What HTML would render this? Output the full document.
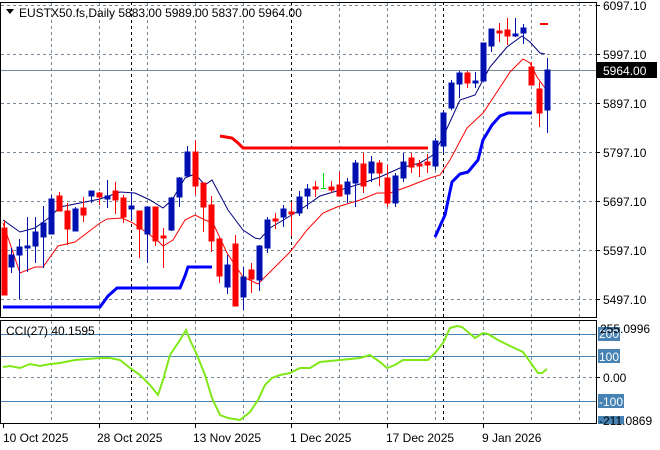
<!DOCTYPE html>
<html><head><meta charset="utf-8"><style>
html,body{margin:0;padding:0;background:#fff;}
svg{display:block;font-family:"Liberation Sans",sans-serif;font-size:12px;}
</style></head><body>
<svg width="660" height="450" viewBox="0 0 660 450" xmlns="http://www.w3.org/2000/svg">
<rect width="660" height="450" fill="#fff"/>
<g stroke="#778899" stroke-dasharray="3,3" stroke-width="1">
<line x1="1" y1="5.5" x2="596" y2="5.5"/><line x1="1" y1="54.5" x2="596" y2="54.5"/><line x1="1" y1="103.5" x2="596" y2="103.5"/><line x1="1" y1="152.5" x2="596" y2="152.5"/><line x1="1" y1="201.5" x2="596" y2="201.5"/><line x1="1" y1="250.5" x2="596" y2="250.5"/><line x1="1" y1="299.5" x2="596" y2="299.5"/>
<line x1="1" y1="377.5" x2="596" y2="377.5"/>
<path d="M51.5 2V317M99.5 2V317M147.5 2V317M195.5 2V317M243.5 2V317M339.5 2V317M387.5 2V317M435.5 2V317M483.5 2V317M531.5 2V317M579.5 2V317"/>
<path d="M51.5 321V423M99.5 321V423M147.5 321V423M195.5 321V423M243.5 321V423M339.5 321V423M387.5 321V423M435.5 321V423M483.5 321V423M531.5 321V423M579.5 321V423"/>
</g>
<g stroke="#000" stroke-dasharray="3,3"><path d="M131.5 2V317M291.5 2V317M443.5 2V317M131.5 321V423M291.5 321V423M443.5 321V423"/></g>
<line x1="1" y1="70.5" x2="596" y2="70.5" stroke="#778899"/>
<g stroke="#4682b4"><line x1="1" y1="334.5" x2="596" y2="334.5"/><line x1="1" y1="356.5" x2="596" y2="356.5"/><line x1="1" y1="401.5" x2="596" y2="401.5"/></g>
<!-- thick lines -->
<polyline fill="none" stroke="#0000ff" stroke-width="3" points="3,307 100,307 108,296 117,288 180,288 185,276 188,267 212,267"/>
<polyline fill="none" stroke="#0000ff" stroke-width="3" points="435,237 445,215 452,182 460,174 468,172 478,160 483,140 492,125 500,116 508,113 532,113"/>
<polyline fill="none" stroke="#ff0000" stroke-width="3" points="220,136 232,138 238,143 243,148 428,148"/>
<line x1="540" y1="24" x2="548" y2="24" stroke="#ff0000" stroke-width="2"/>
<!-- MAs -->
<polyline fill="none" stroke="#000080" points="3,220 20,232 35,228 50,217 60,207 80,203 100,199 120,192 135,193 150,200 163,208 172,200 185,178 195,174 205,185 212,180 228,210 243,230 255,238 260,239 270,228 280,222 300,210 320,196 340,190 360,184 380,177 400,168 420,163 433,155 443,137 460,100 475,95 490,67 507,47 522,36 530,42 540,53 545,54"/>
<polyline fill="none" stroke="#ff0000" points="3,223 20,273 35,267 43,267 58,246 75,242 100,223 107,219 122,218 133,223 143,230 157,240 163,246 173,240 185,220 195,215 205,220 213,223 227,253 243,277 258,284 270,272 290,252 307,230 323,213 337,207 360,200 377,193 390,193 407,187 430,178 440,175 450,160 467,128 483,113 497,92 510,72 523,59 530,63 537,77 545,88"/>
<!-- candles -->
<g stroke-width="1">
<g stroke="#ff0000" fill="#ff0000">
<path d="M4.5 220V295M59.5 192V211M67.5 203V245M83.5 197V222M99.5 192V205M115.5 182V214M123.5 195V223M139.5 211V258M155.5 207V246M163.5 228V268M195.5 140V195M203.5 183V232M211.5 196V252M219.5 238V283M235.5 235V305M251.5 263V293M275.5 213V229M291.5 202V236M315.5 181V197M331.5 181V193M339.5 172V196M363.5 153V193M379.5 160V186M387.5 165V207M411.5 153V173M419.5 160V177M427.5 154V173M467.5 71V88M499.5 23V42M507.5 18V45M531.5 62V85M539.5 82V127"/>
<rect x="2" y="228" width="5" height="67"/><rect x="57" y="196" width="5" height="15"/><rect x="65" y="211" width="5" height="18"/><rect x="81" y="208" width="5" height="7"/><rect x="97" y="193" width="5" height="4"/><rect x="113" y="191" width="5" height="9"/><rect x="121" y="198" width="5" height="19"/><rect x="137" y="211" width="5" height="18"/><rect x="153" y="207" width="5" height="34"/><rect x="161" y="236" width="5" height="2"/><rect x="193" y="152" width="5" height="34"/><rect x="201" y="183" width="5" height="24"/><rect x="209" y="205" width="5" height="36"/><rect x="217" y="239" width="5" height="37"/><rect x="233" y="244" width="5" height="62"/><rect x="249" y="270" width="5" height="9"/><rect x="273" y="219" width="5" height="2"/><rect x="289" y="212" width="5" height="2"/><rect x="313" y="187" width="5" height="2"/><rect x="329" y="187" width="5" height="3"/><rect x="337" y="185" width="5" height="11"/><rect x="361" y="164" width="5" height="22"/><rect x="377" y="163" width="5" height="10"/><rect x="385" y="178" width="5" height="25"/><rect x="409" y="158" width="5" height="9"/><rect x="417" y="164" width="5" height="2"/><rect x="425" y="162" width="5" height="3"/><rect x="465" y="73" width="5" height="10"/><rect x="497" y="31" width="5" height="2"/><rect x="505" y="30" width="5" height="6"/><rect x="529" y="67" width="5" height="18"/><rect x="537" y="89" width="5" height="24"/>
</g>
<g stroke="#0010b0" fill="#0010b0">
<path d="M11.5 248V273M19.5 239V299M27.5 217V272M35.5 217V263M43.5 206V268M51.5 195V234M75.5 207V231M91.5 191V203M107.5 180V208M131.5 193V220M147.5 207V263M171.5 197V231M179.5 177V207M187.5 146V177M227.5 255V294M243.5 267V310M259.5 245V291M267.5 217V253M283.5 205V227M299.5 191V216M307.5 184V209M347.5 178V203M355.5 160V207M371.5 156V182M395.5 173V207M403.5 153V182M435.5 138V170M443.5 110V153M451.5 80V110M459.5 71V98M475.5 72V88M483.5 43V81M491.5 29V52M515.5 18V37M523.5 24V44M547.5 58V133"/>
<rect x="9" y="255" width="5" height="12"/><rect x="17" y="247" width="5" height="8"/><rect x="25" y="246" width="5" height="2"/><rect x="33" y="232" width="5" height="14"/><rect x="41" y="223" width="5" height="14"/><rect x="49" y="199" width="5" height="35"/><rect x="73" y="209" width="5" height="22"/><rect x="89" y="191" width="5" height="5"/><rect x="105" y="196" width="5" height="3"/><rect x="129" y="206" width="5" height="3"/><rect x="145" y="207" width="5" height="27"/><rect x="169" y="198" width="5" height="32"/><rect x="177" y="178" width="5" height="19"/><rect x="185" y="152" width="5" height="24"/><rect x="225" y="265" width="5" height="22"/><rect x="241" y="277" width="5" height="20"/><rect x="257" y="246" width="5" height="34"/><rect x="265" y="220" width="5" height="28"/><rect x="281" y="209" width="5" height="8"/><rect x="297" y="197" width="5" height="16"/><rect x="305" y="189" width="5" height="7"/><rect x="345" y="182" width="5" height="12"/><rect x="353" y="163" width="5" height="20"/><rect x="369" y="162" width="5" height="11"/><rect x="393" y="176" width="5" height="27"/><rect x="401" y="162" width="5" height="16"/><rect x="433" y="141" width="5" height="25"/><rect x="441" y="113" width="5" height="33"/><rect x="449" y="83" width="5" height="25"/><rect x="457" y="73" width="5" height="11"/><rect x="473" y="81" width="5" height="2"/><rect x="481" y="43" width="5" height="38"/><rect x="489" y="29" width="5" height="17"/><rect x="513" y="34" width="5" height="2"/><rect x="521" y="28" width="5" height="5"/><rect x="545" y="70" width="5" height="40"/>
</g>
<path d="M323.5 173V189M321 188.5H326" stroke="#00e000"/>
</g>
<!-- CCI -->
<polyline fill="none" stroke="#7fe817" stroke-width="2" points="3,367 10,366 20,368 30,364 40,366 50,364 60,363 75,360 100,358 110,358 120,360 130,368 140,375 150,385 158,395 163,380 170,355 180,340 186,330 190,340 197,355 205,375 212,398 220,415 228,418 240,420 250,412 258,400 265,385 272,378 280,375 290,373 300,368 310,368 320,362 340,360 360,358 370,355 380,362 387,368 395,365 403,360 420,360 428,360 435,353 443,343 450,328 457,326 462,327 475,338 483,333 488,334 498,340 508,345 523,352 538,373 542,373 547,369"/>
<!-- borders -->
<g fill="none" stroke="#000"><rect x="0.5" y="2.5" width="596" height="315"/><rect x="0.5" y="320.5" width="596" height="103"/></g>
<!-- ticks -->
<g stroke="#000"><path d="M3.5 424V428M99.5 424V428M195.5 424V428M291.5 424V428M387.5 424V428M483.5 424V428"/><path d="M596 5.5H600M596 54.5H600M596 103.5H600M596 152.5H600M596 201.5H600M596 250.5H600M596 299.5H600M596 377.5H600"/></g>
<!-- title -->
<path d="M6 9h8l-4 5z" fill="#000"/>
<text x="19" y="17" fill="#000">EUSTX50.fs,Daily  5883.00 5989.00 5837.00 5964.00</text>
<text x="6" y="335" fill="#000">CCI(27) 40.1595</text>
<!-- axis labels -->
<g fill="#000">
<text x="603" y="10">6097.10</text><text x="603" y="59">5997.10</text><text x="603" y="108">5897.10</text><text x="603" y="157">5797.10</text><text x="603" y="206">5697.10</text><text x="603" y="255">5597.10</text><text x="603" y="304">5497.10</text>
</g>
<rect x="597" y="62" width="60" height="16" fill="#000"/>
<text x="603" y="75" fill="#fff">5964.00</text>
<g fill="#4682b4"><rect x="598" y="327" width="22" height="14"/><rect x="598" y="349" width="22" height="14"/><rect x="598" y="394" width="26" height="14"/><rect x="598" y="416" width="26" height="8"/></g>
<g fill="#fff"><text x="599" y="338">200</text><text x="599" y="361">100</text><text x="599" y="406">-100</text></g>
<g fill="#000"><text x="600" y="333">255.0996</text><text x="603" y="382">0.00</text><text x="599" y="425">-211.0869</text></g>
<g fill="#000">
<text x="3" y="442">10 Oct 2025</text><text x="97" y="442">28 Oct 2025</text><text x="193" y="442">13 Nov 2025</text><text x="290" y="442">1 Dec 2025</text><text x="386" y="442">17 Dec 2025</text><text x="482" y="442">9 Jan 2026</text>
</g>
</svg>
</body></html>
